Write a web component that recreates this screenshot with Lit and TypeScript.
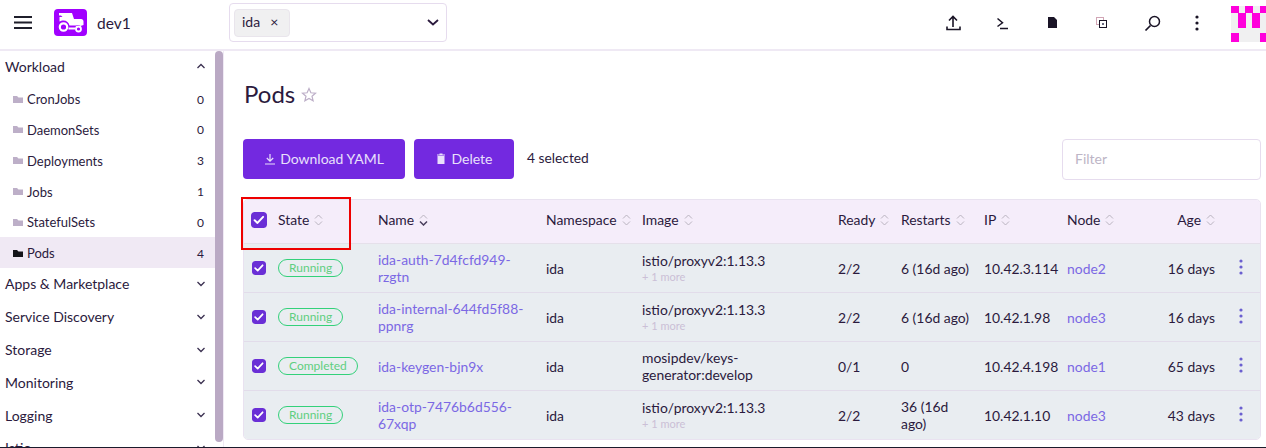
import { LitElement, css, html, svg } from 'lit';
import { customElement } from 'lit/decorators.js';

interface Pod {
  state: string;
  name: string[];
  image: string[];
  more: boolean;
  ready: string;
  restarts: string;
  ip: string;
  node: string;
  age: string;
}

const WORKLOADS = [
  { label: 'CronJobs', count: 0 },
  { label: 'DaemonSets', count: 0 },
  { label: 'Deployments', count: 3 },
  { label: 'Jobs', count: 1 },
  { label: 'StatefulSets', count: 0 },
  { label: 'Pods', count: 4, active: true }
];

const GROUPS = ['Apps & Marketplace', 'Service Discovery', 'Storage', 'Monitoring', 'Logging', 'Istio'];

const PODS: Pod[] = [
  { state: 'Running', name: ['ida-auth-7d4fcfd949-', 'rzgtn'], image: ['istio/proxyv2:1.13.3'], more: true, ready: '2/2', restarts: '6 (16d ago)', ip: '10.42.3.114', node: 'node2', age: '16 days' },
  { state: 'Running', name: ['ida-internal-644fd5f88-', 'ppnrg'], image: ['istio/proxyv2:1.13.3'], more: true, ready: '2/2', restarts: '6 (16d ago)', ip: '10.42.1.98', node: 'node3', age: '16 days' },
  { state: 'Completed', name: ['ida-keygen-bjn9x'], image: ['mosipdev/keys-', 'generator:develop'], more: false, ready: '0/1', restarts: '0', ip: '10.42.4.198', node: 'node1', age: '65 days' },
  { state: 'Running', name: ['ida-otp-7476b6d556-', '67xqp'], image: ['istio/proxyv2:1.13.3'], more: true, ready: '2/2', restarts: '36 (16d ago)', ip: '10.42.1.10', node: 'node3', age: '43 days' }
];

const folder = svg`<path d="M0 1h4l1.500 1.500H10V8H0z" fill="currentColor"/>`;
const check = svg`<path d="M3.600 8.200l2.900 2.700 5.600-6" fill="none" stroke="#fff" stroke-width="2" stroke-linecap="round" stroke-linejoin="round"/>`;

@customElement('app-root')
export class AppRoot extends LitElement {
  public static override styles = css`
    :host {
      display: block;
      width: 1266px;
      height: 448px;
      font-family: 'Lato', 'Liberation Sans', sans-serif;
      color: #141419;
      background: #fff;
    }

    .app {
      position: relative;
      display: flex;
      flex-direction: column;
      height: 448px;
      overflow: hidden;
      border-bottom: 1px solid #1b1b2b;
      box-sizing: border-box;
    }

    .header {
      flex: none;
      display: flex;
      align-items: center;
      height: 51px;
      box-sizing: border-box;
      padding-bottom: 4px;
      border-bottom: 2px solid #efe9f4;
    }

    .header > * {
      flex: none;
    }

    .burger {
      width: 18px;
      height: 13px;
      margin: 0 0 0 14px;
      display: block;
    }

    .logo {
      margin-left: 22px;
      width: 33px;
      height: 27px;
      border-radius: 4px;
      background: #a100ff;
      display: block;
    }

    .cluster {
      margin-left: 10px;
      width: 132px;
      font-size: 15.5px;
      color: #2b1a3d;
    }

    .namespace {
      display: flex;
      align-items: center;
      justify-content: space-between;
      width: 218px;
      height: 39px;
      box-sizing: border-box;
      border: 1px solid #e6dcee;
      border-radius: 4px;
      padding: 0 7px 0 4px;
    }

    .tag {
      display: flex;
      align-items: center;
      gap: 10px;
      height: 28px;
      width: 56px;
      box-sizing: border-box;
      padding: 0 0 2px 7px;
      border: 1px solid #e9e5ec;
      border-radius: 4px;
      background: #f0f0f1;
      font-size: 14px;
      color: #2b1a3d;
    }

    .tag .x {
      font-size: 14px;
    }

    .tools {
      flex: 1 !important;
      display: flex;
      align-items: center;
      padding-left: 497px;
    }

    .tool {
      display: flex;
      align-items: center;
      justify-content: center;
      width: 18px;
      height: 18px;
      flex: none;
    }

    .tool svg {
      display: block;
    }

    .avatar {
      display: block;
      flex: none;
      width: 35px;
      height: 36px;
      margin-top: 3px;
      margin-left: auto;
    }

    .body {
      flex: 1;
      display: flex;
      min-height: 0;
    }

    .nav {
      flex: none;
      width: 224px;
      display: flex;
      box-sizing: border-box;
      border-right: 1px solid #efe9f4;
    }

    .nav-list {
      width: 215px;
      flex: none;
      overflow: hidden;
    }

    .thumb {
      width: 8px;
      height: 391px;
      border-radius: 4px;
      background: #baa9c4;
      flex: none;
    }

    .group {
      display: flex;
      align-items: center;
      justify-content: space-between;
      height: 32.8px;
      padding: 0 9px 0 5px;
      font-size: 14px;
      color: #2b1a3d;
    }

    .group.first {
      height: 31.8px;
      box-sizing: border-box;
      padding-bottom: 1px;
    }

    .item {
      display: flex;
      align-items: center;
      height: 30.8px;
      box-sizing: border-box;
      padding: 2px 11px 0 13px;
      font-size: 13px;
      color: #2b1a3d;
    }

    .item svg {
      width: 10px;
      height: 9px;
      margin-right: 4px;
      color: #bdafc8;
      flex: none;
    }

    .item .count {
      margin-left: auto;
      font-size: 12px;
    }

    .item.active {
      background: #f0e9f4;
    }

    .item.active svg {
      color: #141419;
    }

    .main {
      flex: 1;
      min-width: 0;
      padding: 0 5px 0 19px;
    }

    .title {
      display: flex;
      align-items: center;
      gap: 6px;
      height: 88px;
      box-sizing: border-box;
      padding: 0 0 2px 1px;
      font-size: 24px;
      line-height: 30px;
      color: #2b1a3d;
    }

    .title svg {
      display: block;
      margin-top: 1px;
    }

    .actions {
      display: flex;
      align-items: center;
      height: 40px;
      margin-bottom: 20px;
    }

    .btn {
      display: flex;
      align-items: center;
      justify-content: center;
      gap: 4px;
      height: 40px;
      box-sizing: border-box;
      padding-bottom: 1px;
      border-radius: 4px;
      background: #7329e0;
      color: #e9e0fb;
      font-size: 14px;
      flex: none;
    }

    .btn.download {
      width: 162px;
    }

    .btn.delete {
      width: 100px;
      margin-left: 9px;
      gap: 6px;
    }

    .selected {
      margin-left: 13px;
      margin-bottom: 3px;
      font-size: 13.8px;
      color: #2b1a3d;
    }

    .filter {
      margin-left: auto;
      width: 199px;
      height: 41px;
      box-sizing: border-box;
      border: 1px solid #e6dcee;
      border-radius: 4px;
      padding: 0 12px;
      font-size: 14px;
      line-height: 38px;
      color: #bdb5c6;
    }

    .table {
      width: 1018px;
      border: 1px solid #e9e2f0;
      border-radius: 5px;
      overflow: hidden;
      box-sizing: border-box;
    }

    .row {
      display: grid;
      grid-template-columns: 34px 100px 168px 96px 196px 63px 83px 83px 86px 1fr 45px;
      align-items: center;
      box-sizing: border-box;
      font-size: 13.9px;
      line-height: 17px;
      color: #2b1a3d;
    }

    .row.head {
      height: 44px;
      padding-bottom: 4px;
      background: #f5edfa;
      border-bottom: 1px solid #e5e0ea;
    }

    .row.head .box {
      margin-left: 7px;
    }

    .row.pod {
      height: 49px;
      background: #e9edf1;
      border-bottom: 1px solid #e2dcea;
    }

    .row.pod:last-child {
      height: 48px;
      border-bottom: none;
    }

    .th {
      display: flex;
      align-items: center;
      gap: 5px;
    }

    .th svg {
      display: block;
    }

    .right {
      justify-content: flex-end;
      text-align: right;
    }

    .box {
      display: block;
      margin-left: 8px;
      border-radius: 3px;
    }

    .badge {
      justify-self: start;
      height: 18px;
      box-sizing: border-box;
      padding: 0 10px;
      border: 1px solid #33d17a;
      border-radius: 10px;
      font-size: 12px;
      line-height: 16px;
      color: #5fcf80;
    }

    .link {
      color: #7b68e4;
    }

    .more {
      font-size: 11px;
      line-height: 16px;
      color: #cbbfd6;
    }

    .image {
      padding-right: 10px;
    }

    .restarts {
      max-width: 70px;
    }

    .kebab {
      display: block;
      margin-left: 24px;
      margin-top: -2px;
    }

    .marker {
      position: absolute;
      left: 241px;
      top: 197px;
      width: 110px;
      height: 53px;
      box-sizing: border-box;
      border: 2px solid #ee0000;
    }
  `;

  private renderTools() {
    const gaps = [0, 31, 33, 30, 33, 27];
    const icons = [
      svg`<path d="M9 13V2.500M5 6.500l4-4 4 4M3 12.500v3h13v-3" fill="none" stroke="#1a1426" stroke-width="1.600"/>`,
      svg`<path d="M4.500 4.500l5 4.300-5 3.700M7 14.500h8" fill="none" stroke="#1a1426" stroke-width="1.500"/>`,
      svg`<path d="M4 3h6l3 3v8H4z" fill="#1a1426"/>`,
      svg`<rect x="4.500" y="3.500" width="7" height="7" fill="none" stroke="#a24a6a" stroke-width="1" stroke-dasharray="1 1"/><rect x="7.500" y="6.500" width="7" height="7" fill="#fff" stroke="#1a1426" stroke-width="1"/><rect x="10" y="9" width="2" height="2" fill="#6a6a80"/>`,
      svg`<circle cx="11.500" cy="7.500" r="5" fill="none" stroke="#1a1426" stroke-width="1.500"/><path d="M7.500 11.500L2.500 16.500" stroke="#1a1426" stroke-width="1.700"/>`,
      svg`<circle cx="9" cy="3" r="1.600" fill="#1a1426"/><circle cx="9" cy="9" r="1.600" fill="#1a1426"/><circle cx="9" cy="15" r="1.600" fill="#1a1426"/>`
    ];
    return html`
      <div class="tools">
        ${icons.map(
          (icon, i) => html`
            <span class="tool" style="margin-left:${gaps[i]}px">
              <svg width="18" height="18" viewBox="0 0 18 18">${icon}</svg>
            </span>
          `
        )}
        <svg class="avatar" viewBox="0 0 35 36">
          <rect width="35" height="36" fill="#f0f0f1"/>
          <path fill="#ff00dc" d="M0 0h8v7H0zM14 0h8v7h-8zM29 0h6v7h-6zM7 7h8v15H7zM21 7h8v15H21zM0 27h8v9H0zM29 27h6v9h-6z"/>
        </svg>
      </div>
    `;
  }

  private renderNav() {
    return html`
      <nav class="nav">
        <div class="nav-list">
          <div class="group first">
            <span>Workload</span>
            ${this.chevron(true)}
          </div>
          ${WORKLOADS.map(
            (item) => html`
              <div class="item ${item.active ? 'active' : ''}">
                <svg viewBox="0 0 10 9">${folder}</svg>
                <span>${item.label}</span>
                <span class="count">${item.count}</span>
              </div>
            `
          )}
          ${GROUPS.map(
            (group) => html`
              <div class="group">
                <span>${group}</span>
                ${this.chevron(false)}
              </div>
            `
          )}
        </div>
        <div class="thumb"></div>
      </nav>
    `;
  }

  private chevron(up: boolean) {
    return html`
      <svg width="10" height="6" viewBox="0 0 10 6">
        <path d=${up ? 'M1.500 5L5 1.500 8.500 5' : 'M1.500 1L5 4.500 8.500 1'} fill="none" stroke="#3b3050" stroke-width="1.300"/>
      </svg>
    `;
  }

  private sort(strong = false) {
    const stroke = strong ? '#4a3f5c' : '#b9b3bf';
    return html`
      <svg width="9" height="12" viewBox="0 0 9 12">
        <path d="M1 4.500L4.500 1 8 4.500" fill="none" stroke="#b9b3bf" stroke-width="1"/>
        <path d="M1 7.500L4.500 11 8 7.500" fill="none" stroke=${stroke} stroke-width=${strong ? 1.5 : 1}/>
      </svg>
    `;
  }

  private checkbox(size: number) {
    return html`
      <svg class="box" width=${size} height=${size} viewBox="0 0 16 16">
        <rect width="16" height="16" rx="3.500" fill="#6a2fd6"/>
        ${check}
      </svg>
    `;
  }

  private renderPod(pod: Pod) {
    return html`
      <div class="row pod">
        ${this.checkbox(14)}
        <span class="badge">${pod.state}</span>
        <a class="link">${pod.name.map((line) => html`<div>${line}</div>`)}</a>
        <span>ida</span>
        <div class="image">
          ${pod.image.map((line) => html`<div>${line}</div>`)}
          ${pod.more ? html`<div class="more">+ 1 more</div>` : null}
        </div>
        <span>${pod.ready}</span>
        <span class="restarts">${pod.restarts}</span>
        <span>${pod.ip}</span>
        <a class="link">${pod.node}</a>
        <span class="right">${pod.age}</span>
        <svg class="kebab" width="4" height="16" viewBox="0 0 4 16">
          <circle cx="2" cy="2" r="1.600" fill="#6a5fd0"/>
          <circle cx="2" cy="8" r="1.600" fill="#6a5fd0"/>
          <circle cx="2" cy="14" r="1.600" fill="#6a5fd0"/>
        </svg>
      </div>
    `;
  }

  private renderTable() {
    const cols = ['Namespace', 'Image', 'Ready', 'Restarts', 'IP', 'Node'];
    return html`
      <div class="table">
        <div class="row head">
          ${this.checkbox(16)}
          <span class="th">State ${this.sort()}</span>
          <span class="th">Name ${this.sort(true)}</span>
          ${cols.map((col) => html`<span class="th">${col} ${this.sort()}</span>`)}
          <span class="th right">Age ${this.sort()}</span>
          <span></span>
        </div>
        ${PODS.map((pod) => this.renderPod(pod))}
      </div>
    `;
  }

  public override render() {
    return html`
      <div class="app">
        <header class="header">
          <svg class="burger" viewBox="0 0 18 13">
            <path d="M0 1h18M0 6.500h18M0 12h18" stroke="#1f1f2b" stroke-width="2"/>
          </svg>
          <svg class="logo" viewBox="0 0 33 27">
            <path fill="#fff" d="M5 4h13l2 6h7c1.500 0 2.500 1 2.500 2.500V16l-3 1c-1-1-3-1.500-4.500-.5h-6.500c-.5-3-3-5-6-5-1.500 0-3 .5-4 1V8h3L7 6.500H5z"/>
            <circle cx="9.500" cy="18" r="3.700" fill="none" stroke="#fff" stroke-width="2.200"/>
            <circle cx="24.500" cy="20" r="2.500" fill="none" stroke="#fff" stroke-width="1.800"/>
            <path d="M14.500 19.500h7" stroke="#fff" stroke-width="1.800"/>
          </svg>
          <span class="cluster">dev1</span>
          <div class="namespace">
            <span class="tag">ida <span class="x">×</span></span>
            <svg width="12" height="7" viewBox="0 0 12 7">
              <path d="M1 1l5 4.500L11 1" fill="none" stroke="#2b1a3d" stroke-width="1.800"/>
            </svg>
          </div>
          ${this.renderTools()}
        </header>
        <div class="body">
          ${this.renderNav()}
          <main class="main">
            <div class="title">
              <span>Pods</span>
              <svg width="16" height="16" viewBox="0 0 16 16">
                <path d="M8 1.500l1.900 4.300 4.600.4-3.500 3 1.100 4.600L8 11.400l-4.100 2.400L5 9.200l-3.500-3 4.600-.4z" fill="none" stroke="#bdafc8" stroke-width="1.200"/>
              </svg>
            </div>
            <div class="actions">
              <div class="btn download">
                <svg width="12" height="12" viewBox="0 0 12 12">
                  <path d="M6 1v7M2.800 5L6 8.200 9.200 5M1 11h10" fill="none" stroke="#e9e0fb" stroke-width="1.200"/>
                </svg>
                Download YAML
              </div>
              <div class="btn delete">
                <svg width="10" height="11" viewBox="0 0 10 11">
                  <path d="M1 1.500h8v1H1zM3.500 .5h3v1h-3zM1.500 3h7v8h-7z" fill="#e9e0fb"/>
                </svg>
                Delete
              </div>
              <span class="selected">4 selected</span>
              <div class="filter">Filter</div>
            </div>
            ${this.renderTable()}
          </main>
        </div>
        <div class="marker"></div>
      </div>
    `;
  }
}
